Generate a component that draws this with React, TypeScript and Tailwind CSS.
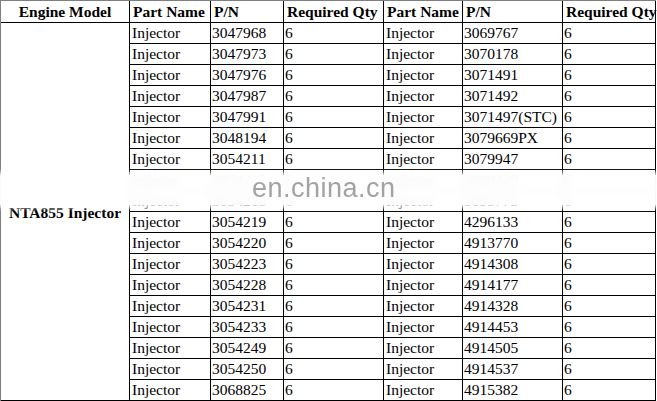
import React from "react";

const left = ["3047968","3047973","3047976","3047987","3047991","3048194","3054211","3054215","3054218","3054219","3054220","3054223","3054228","3054231","3054233","3054249","3054250","3068825"];
const right = ["3069767","3070178","3071491","3071492","3071497(STC)","3079669PX","3079947","3080429","3095773","4296133","4913770","4914308","4914177","4914328","4914453","4914505","4914537","4915382"];

const headers = ["Part Name", "P/N", "Required Qty", "Part Name", "P/N", "Required Qty"];

export default function App() {
  return (
    <div className="relative w-[657px] h-[401px] bg-white overflow-hidden" style={{ fontFamily: '"Liberation Serif", "Times New Roman", serif' }}>
      <div className="w-[656px] border-t border-l border-[#7f7f7f]">
        <div className="grid grid-cols-[128px_80px_72px_99px_78px_99px_92px] grid-rows-[21px_repeat(18,20px)] gap-px bg-black pr-px pb-px text-[15.5px] leading-none text-black">
          <div className="bg-white flex items-center justify-center font-bold">Engine Model</div>
          {headers.map((h, i) => (
            <div key={i} className="bg-white flex items-center pl-[3px] font-bold whitespace-nowrap">{h}</div>
          ))}
          <div className="bg-white row-[span_18/span_18] flex items-center justify-center font-bold pt-[3px]">NTA855 Injector</div>
          {left.map((p, i) => (
            <React.Fragment key={i}>
              <div className="bg-white flex items-center pl-[2px]">Injector</div>
              <div className="bg-white flex items-center pl-[1px]">{p}</div>
              <div className="bg-white flex items-center pl-[1px]">6</div>
              <div className="bg-white flex items-center pl-[2px]">Injector</div>
              <div className="bg-white flex items-center pl-[1px] whitespace-nowrap">{right[i]}</div>
              <div className="bg-white flex items-center pl-[1px]">6</div>
            </React.Fragment>
          ))}
        </div>
      </div>
      <div className="absolute left-0 top-[175px] w-[657px] h-[30px] bg-white/95 backdrop-blur-[4px] shadow-[0_0_4px_3px_rgba(255,255,255,0.85)]" />
      <div className="absolute left-[252px] top-[175px] text-[27px] leading-none text-[#a3a3a3] tracking-[0.5px]" style={{ fontFamily: '"Liberation Sans", Arial, sans-serif' }}>en.china.cn</div>
    </div>
  );
}
